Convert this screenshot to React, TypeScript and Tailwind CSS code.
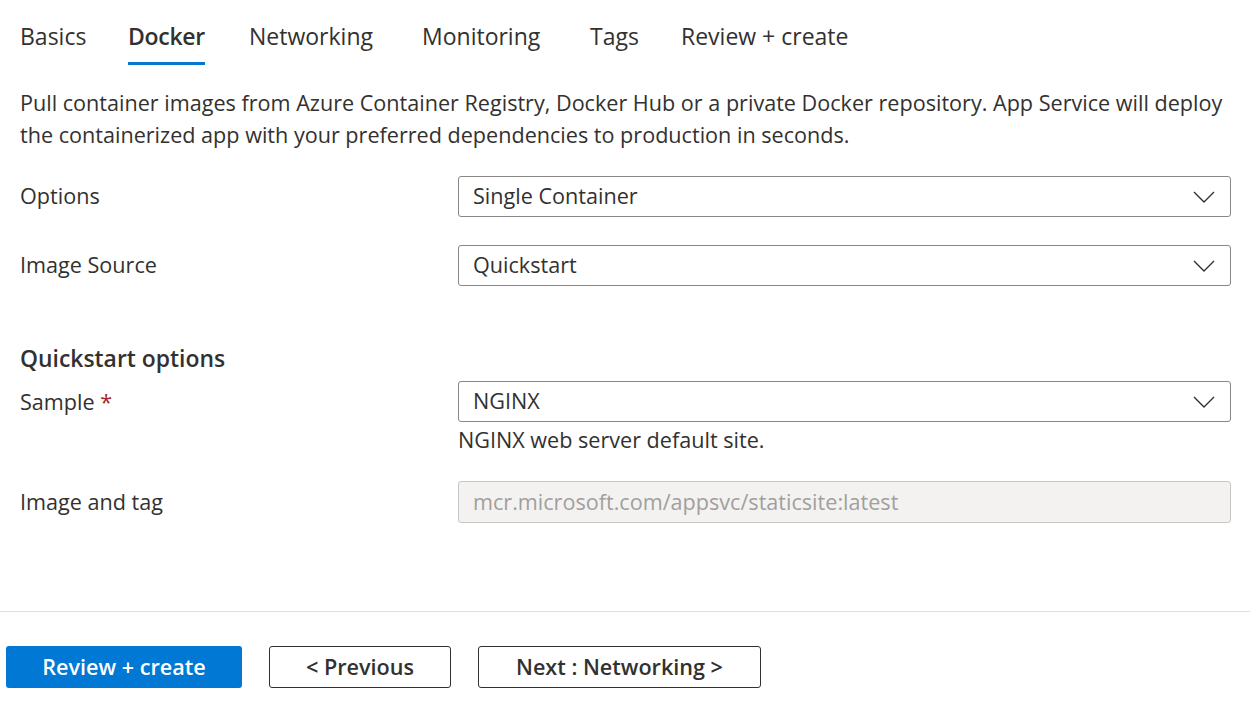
import React from "react";

const font = { fontFamily: '"Open Sans", "Noto Sans", sans-serif' };

function Chevron() {
  return (
    <svg width="22" height="12" viewBox="0 0 22 12" fill="none">
      <path d="M1 1l10 10L21 1" stroke="#323130" strokeWidth="1.4" />
    </svg>
  );
}

function Select({ value }: { value: string }) {
  return (
    <div className="flex h-[41px] w-[773px] items-center justify-between rounded-[3px] border border-[#8a8886] bg-white pl-[14px] pr-[15px] text-[21.6px] text-[#323130]">
      <span>{value}</span>
      <Chevron />
    </div>
  );
}

const tabs: { label: string; w: string }[] = [
  { label: "Basics", w: "w-[108px]" },
  { label: "Docker", w: "w-[121px]" },
  { label: "Networking", w: "w-[173px]" },
  { label: "Monitoring", w: "w-[168px]" },
  { label: "Tags", w: "w-[91px]" },
  { label: "Review + create", w: "w-[200px]" },
];

export default function App() {
  return (
    <div className="h-[704px] w-[1250px] overflow-hidden bg-white text-[#323130]" style={font}>
      <div className="flex pl-[20px] pt-[20px] text-[23px]">
        {tabs.map((t) => (
          <div key={t.label} className={t.w}>
            <div className="flex w-fit flex-col">
              <span className={t.label === "Docker" ? "font-semibold leading-[32px] tracking-[-0.3px]" : "leading-[32px]"}>
                {t.label}
              </span>
              <div className={t.label === "Docker" ? "mt-[10px] h-[3px] bg-[#0078d4]" : "mt-[10px] h-[3px]"} />
            </div>
          </div>
        ))}
      </div>
      <p className="mt-[22px] pl-[20px] text-[21.6px] leading-[32px]">
        Pull container images from Azure Container Registry, Docker Hub or a private Docker repository. App Service will deploy
        <br />
        the containerized app with your preferred dependencies to production in seconds.
      </p>
      <div className="mt-[25px] flex items-center pl-[20px] text-[21.6px]">
        <span className="w-[438px]">Options</span>
        <Select value="Single Container" />
      </div>
      <div className="mt-[28px] flex items-center pl-[20px] text-[21.6px]">
        <span className="w-[438px]">Image Source</span>
        <Select value="Quickstart" />
      </div>
      <div className="mt-[58px] pl-[20px] text-[22.9px] font-semibold leading-[30px]">Quickstart options</div>
      <div className="mt-[7px] flex pl-[20px] text-[21.6px]">
        <span className="w-[438px] pt-[6px] leading-[30px]">
          Sample <span className="text-[#a4262c]">*</span>
        </span>
        <div className="flex flex-col">
          <Select value="NGINX" />
          <span className="mt-[3px] leading-[30px]">NGINX web server default site.</span>
        </div>
      </div>
      <div className="mt-[26px] flex items-center pl-[20px] text-[21.6px]">
        <span className="w-[438px]">Image and tag</span>
        <div className="flex h-[42px] w-[773px] items-center rounded-[3px] border border-[#c8c6c4] bg-[#f3f2f1] pl-[14px] text-[#a19f9d]">
          mcr.microsoft.com/appsvc/staticsite:latest
        </div>
      </div>
      <div className="mt-[88px] h-px bg-[#e1dfdd]" />
      <div className="mt-[34px] flex gap-[27px] pl-[6px] text-[21.6px] font-semibold">
        <button className="h-[42px] w-[236px] rounded-[3px] bg-[#0078d4] text-white">Review + create</button>
        <button className="h-[42px] w-[182px] rounded-[3px] border border-[#323130] bg-white">&lt; Previous</button>
        <button className="h-[42px] w-[283px] rounded-[3px] border border-[#323130] bg-white">Next : Networking &gt;</button>
      </div>
    </div>
  );
}
